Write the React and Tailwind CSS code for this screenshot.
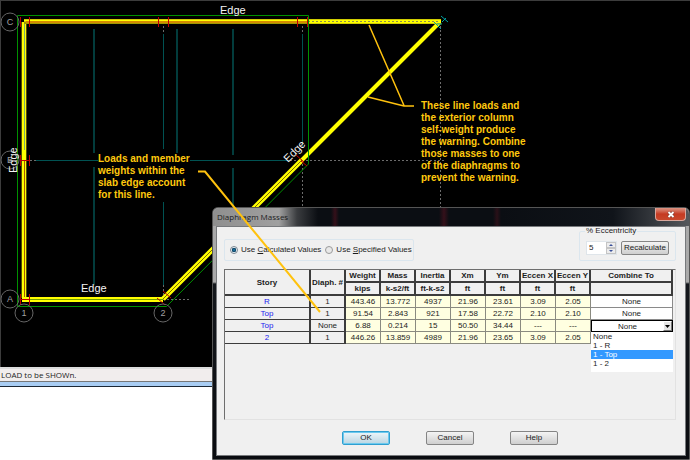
import { useState } from "react";

const COLUMNS = [
  { name: "Weight", unit: "kips" },
  { name: "Mass", unit: "k-s2/ft" },
  { name: "Inertia", unit: "ft-k-s2" },
  { name: "Xm", unit: "ft" },
  { name: "Ym", unit: "ft" },
  { name: "Eccen X", unit: "ft" },
  { name: "Eccen Y", unit: "ft" },
];

const ROWS = [
  { story: "R", diaph: "1", values: ["443.46", "13.772", "4937", "21.96", "23.61", "3.09", "2.05"] },
  { story: "Top", diaph: "1", values: ["91.54", "2.843", "921", "17.58", "22.72", "2.10", "2.10"] },
  { story: "Top", diaph: "None", values: ["6.88", "0.214", "15", "50.50", "34.44", "---", "---"] },
  { story: "2", diaph: "1", values: ["446.26", "13.859", "4989", "21.96", "23.65", "3.09", "2.05"] },
];

const COMBINE_OPTIONS = ["None", "1 - R", "1 - Top", "1 - 2"];

const GRID_BUBBLES = [
  { label: "C", x: 10, y: 22 },
  { label: "B", x: 10, y: 160 },
  { label: "A", x: 10, y: 299 },
  { label: "1", x: 24, y: 313 },
  { label: "2", x: 163, y: 313 },
];

function FramingPlan() {
  return (
    <svg viewBox="0 0 690 367" className="block w-full bg-black font-['Liberation_Sans',sans-serif]" role="img" aria-label="Framing plan">
      <path d="M0 .5H690M.5 0V367" stroke="#3c3c3c" />

      {/* deck spans */}
      <path d="M94 29V153M94 167V285M177 29V154M233 29V155M233 168V290" stroke="#023c3c" strokeWidth="2" />
      <path d="M163.500 34V149M163.500 202V285M302.500 34V147M36 160.500H290" stroke="#005252" />

      {/* grid lines */}
      <g stroke="#6c6c6c" strokeDasharray="2 2">
        <path d="M163.500 22V34M163.500 285V298M302.500 22V34M440.500 22V260M302.500 160V260" />
        <path d="M302 160.500H446M163 299.500H189M290 160.500H302M30 160.500H36" />
      </g>

      {/* beams */}
      <path d="M302 160L440 22" stroke="#ffff00" strokeWidth="4" />
      <path d="M163 299L302 160" stroke="#ffff00" strokeWidth="5" />
      <path d="M163 299L302 160" stroke="#7e6600" />
      <path d="M24 298V22" stroke="#a8a000" strokeWidth="5" />
      <path d="M24 298V22" stroke="#ffff00" strokeWidth="4" />
      <path d="M24.500 150V22" stroke="#7fae70" />
      <path d="M24.500 298V160" stroke="#a85a00" />
      <path d="M22 299.500H163" stroke="#ffff00" strokeWidth="5" />
      <path d="M26 299.500H163" stroke="#73a000" />
      <path d="M24 21.500H441" stroke="#a09800" strokeWidth="5" />
      <path d="M24 20.500H441" stroke="#ffff00" strokeWidth="2" />
      <path d="M26 22H308" stroke="#d48c00" strokeWidth="2" />
      <path d="M308 22H441" stroke="#ffff00" strokeWidth="3" />
      <path d="M308 21.500H438" stroke="#8c8c50" strokeDasharray="2 2" />

      {/* slab edge */}
      <path d="M17.500 15.500H308.500V164L166.500 306.500H17.500Z" fill="none" stroke="#009000" />

      {/* releases */}
      <g stroke="#c00000" fill="none">
        <path d="M20.500 17V27M29.500 17V27M158.500 17V27M168.500 17V27M297.500 17V27M307.500 17V27" />
        <path d="M20.500 155V166M29.500 155V166M20 160.500H30M20.500 294V305M29.500 294V305M20 299.500H30" />
        <path d="M157 298L165 305M163 291L171 298M296 155L304 162M301 161L307 166" />
      </g>
      <g stroke="#00a0a0" fill="none">
        <path d="M441 16L448 22M446 18L442 22M434 22L441 29M437 24H442" />
      </g>

      {GRID_BUBBLES.map((b) => (
        <g key={b.label}>
          <circle cx={b.x} cy={b.y} r="9" fill="none" stroke="#666666" />
          <text x={b.x} y={b.y + 3} fontSize="9" fill="#a0a0a0" textAnchor="middle">
            {b.label}
          </text>
        </g>
      ))}

      <g fontSize="11" fill="#f4f4f4">
        <text x="220" y="14">Edge</text>
        <text x="81" y="292">Edge</text>
        <text transform="translate(17 173) rotate(-90)">Edge</text>
        <text transform="translate(288 163) rotate(-45)">Edge</text>
      </g>
    </svg>
  );
}

function PushButton({ children, isDefault = false }) {
  return (
    <button
      type="button"
      className={`h-[14px] w-12 rounded-xs border bg-linear-to-b leading-3 ${
        isDefault
          ? "border-[#2f9fd0] from-[#eef6fa] to-[#b9d5e2] ring-1 ring-[#6cc9ee] ring-inset"
          : "border-[#858585] from-[#f4f4f4] to-[#cfcfcf]"
      }`}
    >
      {children}
    </button>
  );
}

function CombineCell() {
  const [value, setValue] = useState("None");
  const [highlighted, setHighlighted] = useState("1 - Top");

  return (
    <div className="relative h-[12px]">
      <select
        aria-label="Combine to"
        value={value}
        onChange={(e) => setValue(e.target.value)}
        className="block h-full w-full appearance-none border border-black bg-white pr-[9px] text-center leading-[9px]"
      >
        {COMBINE_OPTIONS.map((o) => (
          <option key={o}>{o}</option>
        ))}
      </select>
      <span className="pointer-events-none absolute top-px right-px flex h-[10px] w-[9px] items-center justify-center border border-t-white border-r-[#777] border-b-[#777] border-l-white bg-[#e4e4e4]">
        <svg viewBox="0 0 5 3" className="h-[3px] w-[5px]">
          <path d="M0 0H5L2.500 3Z" />
        </svg>
      </span>
      <ul role="listbox" aria-label="Combine to options" className="absolute top-full right-0 left-0 z-10 bg-white pb-1 text-left">
        {COMBINE_OPTIONS.map((o) => (
          <li
            key={o}
            role="option"
            aria-selected={o === highlighted}
            onMouseEnter={() => setHighlighted(o)}
            onClick={() => setValue(o)}
            className={`pl-[2px] leading-[9px] ${o === highlighted ? "bg-[#3399ff] text-white" : ""}`}
          >
            {o}
          </li>
        ))}
      </ul>
    </div>
  );
}

function MassTable() {
  return (
    <table className="w-full table-fixed border-separate border-spacing-0 text-center leading-[11px]">
      <colgroup>
        <col className="w-[86px]" />
        <col className="w-[35px]" />
        {COLUMNS.map((c) => (
          <col key={c.name} className="w-[35px]" />
        ))}
        <col />
      </colgroup>
      <thead className="[&_th]:h-[13px] [&_th]:border-r-2 [&_th]:border-b-2 [&_th]:border-[#3c3c3c] [&_th]:p-0 [&_th]:whitespace-nowrap">
        <tr>
          <th rowSpan={2}>Story</th>
          <th rowSpan={2}>Diaph. #</th>
          {COLUMNS.map((c) => (
            <th key={c.name}>{c.name}</th>
          ))}
          <th>Combine To</th>
        </tr>
        <tr>
          {COLUMNS.map((c) => (
            <th key={c.name}>{c.unit}</th>
          ))}
          <th />
        </tr>
      </thead>
      <tbody className="[&_td]:h-[12px] [&_td]:p-0">
        {ROWS.map((row, i) => (
          <tr key={i}>
            <td className="border-r-2 border-b border-[#3c3c3c] text-[#2222ee]">{row.story}</td>
            <td className="border-r-2 border-b border-[#3c3c3c]">{row.diaph}</td>
            {row.values.map((v, j) => (
              <td key={j} className="border-r border-b border-[#8a8a80] bg-[#ffffe1]">
                {v}
              </td>
            ))}
            {i === 2 ? (
              <td>
                <CombineCell />
              </td>
            ) : (
              <td className="border-r border-b border-[#8a8a8a] bg-white pr-[9px]">None</td>
            )}
          </tr>
        ))}
      </tbody>
    </table>
  );
}

function DiaphragmMassesDialog() {
  const [mode, setMode] = useState("calculated");
  const [eccentricity, setEccentricity] = useState("5");

  return (
    <section
      role="dialog"
      aria-labelledby="dialog-title"
      className="absolute top-[207px] right-0 left-[212px] rounded-t-md border border-[#555] bg-[linear-gradient(#a8a8a8_0,#aaaaaa_74px,#14171c_76px,#0a0c10_100%)] px-[3px] pb-[3px] font-['Liberation_Sans',sans-serif] text-[8px] text-[#1c1c1c]"
    >
      <header className="-mx-[3px] flex h-[18px] items-start justify-between rounded-t-md bg-[linear-gradient(90deg,#8f8f8f_0,#a0a0a0_66px,#3a3c3f_84px,#0b0e13_105px,#0b0e13_118px,#35101a_122px,#0b0e13_126px,#0b0e13_226px,#35101a_231px,#0b0e13_236px,#0b0e13_280px,#2a1018_284px,#0b0e13_288px,#10141a_400px,#55585c_100%)] pr-[3px] pl-1">
        <h2 id="dialog-title" className="font-['Open_Sans',sans-serif] leading-[17px]">
          Diaphragm Masses
        </h2>
        <button
          type="button"
          aria-label="Close"
          className="flex h-[13px] w-[31px] items-center justify-center rounded-b-sm border border-t-0 border-[#d9a79c] bg-linear-to-b from-[#dc9484] via-[#c53a22] to-[#c8482c]"
        >
          <svg viewBox="0 0 8 7" className="h-[7px] w-2" fill="none">
            <path d="M1.500 1L6.500 6M6.500 1L1.500 6" stroke="#6b2a20" strokeWidth="3" />
            <path d="M1.500 1L6.500 6M6.500 1L1.500 6" stroke="#ffffff" strokeWidth="2" />
          </svg>
        </button>
      </header>

      <div className="border border-[#77797c] bg-[#f0f0f0] pt-[2px] pr-[9px] pb-[10px] pl-[7px]">
        <div className="flex h-10 items-end justify-between pb-[8px]">
          <fieldset className="flex h-[22px] w-[190px] items-center gap-1 rounded-xs border border-[#dbe6ee] pl-[5px]">
            <label className="flex items-center gap-[3px] whitespace-nowrap">
              <input
                type="radio"
                name="mode"
                checked={mode === "calculated"}
                onChange={() => setMode("calculated")}
                className="size-2 appearance-none rounded-full border border-[#7c8690] bg-white checked:bg-[radial-gradient(#1f86b8_0,#12405f_45%,#e6f0f5_60%)]"
              />
              <span>
                Use <u>C</u>alculated Values
              </span>
            </label>
            <label className="flex items-center gap-[3px] whitespace-nowrap">
              <input
                type="radio"
                name="mode"
                checked={mode === "specified"}
                onChange={() => setMode("specified")}
                className="size-2 appearance-none rounded-full border border-[#9a9a9a] bg-[#e8e8e8] checked:bg-[radial-gradient(#1f86b8_0,#12405f_45%,#e6f0f5_60%)]"
              />
              <span>
                Use <u>S</u>pecified Values
              </span>
            </label>
          </fieldset>

          <fieldset className="rounded-xs border border-[#dbe6ee] px-[6px] pb-[5px]">
            <legend className="-ml-px px-px leading-[8px]">% Eccentricity</legend>
            <div className="flex gap-1 pt-[6px]">
              <div className="flex h-[14px] w-[31px] border border-[#dfe5ea] bg-white">
                <input
                  aria-label="Percent eccentricity"
                  value={eccentricity}
                  onChange={(e) => setEccentricity(e.target.value)}
                  className="w-[19px] pl-[2px] leading-3"
                />
                <div className="flex flex-1 flex-col">
                  <button
                    type="button"
                    aria-label="Increase"
                    onClick={() => setEccentricity(String(Number(eccentricity) + 1))}
                    className="flex h-[6px] items-center justify-center border border-[#c4c4c4] bg-[#ececec]"
                  >
                    <svg viewBox="0 0 4 2" className="h-[2px] w-1">
                      <path d="M0 2L2 0L4 2Z" fill="#39509a" />
                    </svg>
                  </button>
                  <button
                    type="button"
                    aria-label="Decrease"
                    onClick={() => setEccentricity(String(Number(eccentricity) - 1))}
                    className="flex h-[6px] items-center justify-center border border-[#c4c4c4] bg-[#ececec]"
                  >
                    <svg viewBox="0 0 4 2" className="h-[2px] w-1">
                      <path d="M0 0L2 2L4 0Z" fill="#39509a" />
                    </svg>
                  </button>
                </div>
              </div>
              <PushButton>Recalculate</PushButton>
            </div>
          </fieldset>
        </div>

        <div className="min-h-[151px] border border-t-[#6e6e6e] border-r-[#e2e2e2] border-b-[#e2e2e2] border-l-[#6e6e6e] pr-[2px]">
          <MassTable />
        </div>

        <div className="mt-[11px] flex justify-center gap-9">
          <PushButton isDefault>OK</PushButton>
          <PushButton>Cancel</PushButton>
          <PushButton>Help</PushButton>
        </div>
      </div>
    </section>
  );
}

function Callouts() {
  return (
    <div className="pointer-events-none absolute inset-0 font-['Liberation_Sans',sans-serif] text-[10px] leading-3 font-bold text-[#ffc90e]">
      <svg viewBox="0 0 690 460" className="absolute inset-x-0 top-0 w-full" fill="none" stroke="#ffc20e" strokeWidth="2">
        <path d="M198 171.500H205L320 312" />
        <path d="M369 25L404 105.500M368 97L404 106H414" strokeWidth="1.500" />
      </svg>
      <p className="absolute top-[153px] left-[98px] bg-black whitespace-nowrap">
        Loads and member
        <br />
        weights within the
        <br />
        slab edge account
        <br />
        for this line.
      </p>
      <p className="absolute top-[100px] left-[421px] whitespace-nowrap">
        These line loads and
        <br />
        the exterior column
        <br />
        self-weight produce
        <br />
        the warning. Combine
        <br />
        those masses to one
        <br />
        of the diaphragms to
        <br />
        prevent the warning.
      </p>
    </div>
  );
}

export default function App() {
  return (
    <main className="relative min-h-screen overflow-hidden bg-white">
      <FramingPlan />
      <footer className="border-b border-[#1c2836]">
        <p className="border-t-2 border-[#dcdcdc] bg-[#f1eded] pl-px font-['Open_Sans',sans-serif] text-[8px] leading-3 text-[#222]">
          LOAD to be SHOWn.
        </p>
        <div className="h-[5px] border-t border-[#777] bg-[#a9cdf3]" />
      </footer>
      <DiaphragmMassesDialog />
      <Callouts />
    </main>
  );
}
